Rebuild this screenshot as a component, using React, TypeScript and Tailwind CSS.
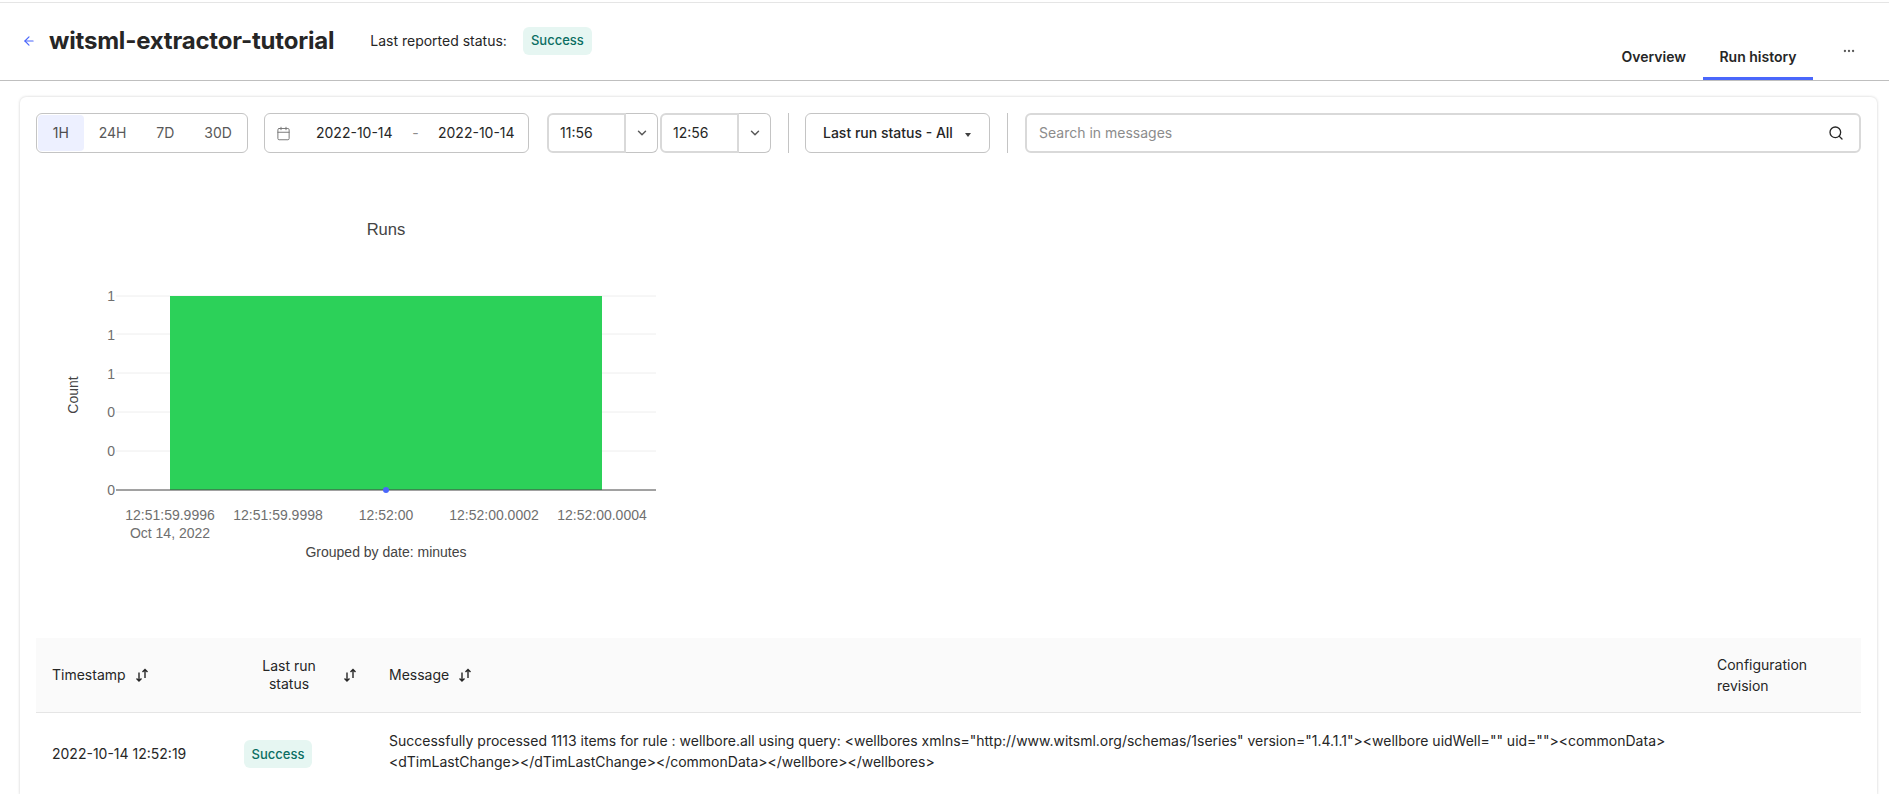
import { ArrowLeft, Calendar, ChevronDown, MoreHorizontal, Search } from 'lucide-react';

const font = { fontFamily: '"Liberation Sans", Arial, sans-serif' };

function SortIcon() {
  return (
    <svg width="14" height="16" viewBox="0 0 14 16" fill="none" stroke="#262626" strokeWidth="1.4" className="shrink-0">
      <path d="M4 5.5V14M1.5 11.5 4 14l2.5-2.5" />
      <path d="M10 11V2.5M7.5 5 10 2.5 12.5 5" />
    </svg>
  );
}

function SuccessBadge() {
  return (
    <span className="inline-flex h-7 w-[68px] items-center justify-center rounded-md bg-[#e6f6f2] text-[13px] font-medium text-[#0b6e62]">
      Success
    </span>
  );
}

function RunsChart() {
  const gridY = [143, 181, 220, 259, 298];
  const yLabels = ['1', '1', '1', '0', '0', '0'];
  const xLabels = [
    { x: 134, text: '12:51:59.9996' },
    { x: 242, text: '12:51:59.9998' },
    { x: 350, text: '12:52:00' },
    { x: 458, text: '12:52:00.0002' },
    { x: 566, text: '12:52:00.0004' },
  ];
  return (
    <svg width="640" height="485" viewBox="0 0 640 485" style={font} className="block">
      <text x="350" y="82" textAnchor="middle" fontSize="16.6" fill="#444">Runs</text>
      {gridY.map((y) => (
        <line key={y} x1="80" x2="620" y1={y} y2={y} stroke="#eeeeee" strokeWidth="1" />
      ))}
      <rect x="134" y="143" width="432" height="194" fill="#2cd159" />
      <line x1="80" x2="620" y1="337" y2="337" stroke="#444" strokeWidth="1" />
      <circle cx="350" cy="337" r="3" fill="#4a67fb" />
      {yLabels.map((t, i) => (
        <text key={i} x="79" y={148 + i * 38.8} textAnchor="end" fontSize="14" fill="#6f6f6f">{t}</text>
      ))}
      {xLabels.map((l) => (
        <text key={l.x} x={l.x} y="367" textAnchor="middle" fontSize="14" fill="#6f6f6f">{l.text}</text>
      ))}
      <text x="134" y="385" textAnchor="middle" fontSize="14" fill="#6f6f6f">Oct 14, 2022</text>
      <text x="350" y="404" textAnchor="middle" fontSize="14" fill="#444">Grouped by date: minutes</text>
      <text x="0" y="0" transform="translate(42 242) rotate(-90)" textAnchor="middle" fontSize="14" fill="#444">Count</text>
    </svg>
  );
}

function TimeSelect({ value }: { value: string }) {
  return (
    <div className="flex h-10 w-[111px] shrink-0">
      <div className="flex w-[79px] items-center rounded-l-md border-2 border-[#d9d9d9] pl-[11px] text-sm text-[#262626]">{value}</div>
      <div className="flex flex-1 items-center justify-center rounded-r-md border border-l-0 border-[#c4c4c4]">
        <ChevronDown size={14} strokeWidth={2.5} className="text-[#595959]" />
      </div>
    </div>
  );
}

export default function App() {
  return (
    <div className="h-[794px] w-full overflow-hidden bg-white text-[#262626]" style={{ fontFamily: 'Inter, sans-serif' }}>
      <header className="mt-[2px] flex h-[79px] border-t border-b border-t-[#e5e5e5] border-b-[#bfbfbf]">
        <div className="flex h-[77px] items-center pb-[2px] pl-[22px]">
          <ArrowLeft size={14} strokeWidth={2} className="text-[#4a67fb]" />
          <h1 className="ml-[13px] text-2xl font-bold tracking-[-0.2px] text-[#262626]">witsml-extractor-tutorial</h1>
          <span className="ml-[36px] text-sm">Last reported status:</span>
          <span className="ml-[16px] inline-flex h-7 w-[69px] items-center justify-center rounded-md bg-[#e6f6f2] text-[13px] font-medium text-[#0b6e62]">Success</span>
        </div>
        <nav className="ml-auto flex items-end">
          <span className="mb-[3px] flex h-[40px] items-center text-sm font-semibold">Overview</span>
          <span className="ml-[17px] flex h-[43px] w-[110px] items-center justify-center border-b-[3px] border-[#4a67fb] text-sm font-semibold">Run history</span>
          <span className="mb-[3px] ml-[29px] mr-[33px] flex h-[40px] items-center pb-[12px]">
            <MoreHorizontal size={14} className="text-[#595959]" />
          </span>
        </nav>
      </header>

      <main className="ml-5 mr-3 mt-[16px] rounded-t-md bg-white px-4 pt-4 shadow-[0_0_3px_rgba(0,0,0,0.2)]">
        <div className="flex h-10 items-center">
          <div className="flex h-10 w-[212px] shrink-0 items-center rounded-md border border-[#c4c4c4] pl-[1px] text-sm text-[#595959]">
            <span className="flex h-9 w-[46px] items-center justify-center rounded bg-[#edf0ff] text-[#4d4d4d]">1H</span>
            <span className="flex w-[58px] justify-center">24H</span>
            <span className="flex w-[48px] justify-center">7D</span>
            <span className="flex w-[58px] justify-center">30D</span>
          </div>
          <div className="ml-[16px] flex h-10 w-[265px] shrink-0 items-center rounded-md border border-[#c4c4c4] pl-[11px] text-sm">
            <Calendar size={15} strokeWidth={1.5} className="text-[#737373]" />
            <span className="ml-[25px] w-[77px]">2022-10-14</span>
            <span className="w-[45px] text-center text-[#8c8c8c]">-</span>
            <span>2022-10-14</span>
          </div>
          <div className="ml-[18px] flex gap-[2px]">
            <TimeSelect value="11:56" />
            <TimeSelect value="12:56" />
          </div>
          <div className="ml-[17px] h-10 w-px bg-[#c4c4c4]" />
          <div className="ml-[16px] flex h-10 w-[185px] shrink-0 items-center rounded-md border border-[#c4c4c4] pb-[1px] pl-[17px] text-sm font-medium">
            Last run status - All
            <span className="ml-[12px] mt-[4px] h-0 w-0 border-x-[3.5px] border-t-[4px] border-x-transparent border-t-[#404040]" />
          </div>
          <div className="ml-[17px] h-10 w-px bg-[#c4c4c4]" />
          <div className="ml-[17px] flex h-10 flex-1 items-center justify-between rounded-md border-2 border-[#d9d9d9] pl-[12px] pr-[15px] text-sm text-[#8c8c8c]">
            Search in messages
            <Search size={16} strokeWidth={2} className="text-[#262626]" />
          </div>
        </div>

        <RunsChart />

        <div className="grid grid-cols-[192px_145px_1328px_160px] text-sm">
          <div className="flex h-[75px] items-center gap-[9px] border-b border-[#e5e5e5] bg-[#fafafa] pl-4">
            Timestamp <SortIcon />
          </div>
          <div className="flex h-[75px] items-center border-b border-[#e5e5e5] bg-[#fafafa] pl-4">
            <span className="w-[90px] text-center leading-[18px]">Last run status</span>
            <span className="ml-[9px]"><SortIcon /></span>
          </div>
          <div className="flex h-[75px] items-center gap-[9px] border-b border-[#e5e5e5] bg-[#fafafa] pl-4">
            Message <SortIcon />
          </div>
          <div className="flex h-[75px] items-center border-b border-[#e5e5e5] bg-[#fafafa] pl-4 leading-[21px]">
            Configuration revision
          </div>

          <div className="flex h-[82px] items-center pl-4">2022-10-14 12:52:19</div>
          <div className="flex h-[82px] items-center pl-4"><SuccessBadge /></div>
          <div className="col-span-1 pl-4 pt-[17px] leading-[21px]">
            Successfully processed 1113 items for rule : wellbore.all using query: &lt;wellbores xmlns="http://www.witsml.org/schemas/1series" version="1.4.1.1"&gt;&lt;wellbore uidWell="" uid=""&gt;&lt;commonData&gt;&lt;dTimLastChange&gt;&lt;/dTimLastChange&gt;&lt;/commonData&gt;&lt;/wellbore&gt;&lt;/wellbores&gt;
          </div>
          <div />
        </div>
      </main>
    </div>
  );
}
